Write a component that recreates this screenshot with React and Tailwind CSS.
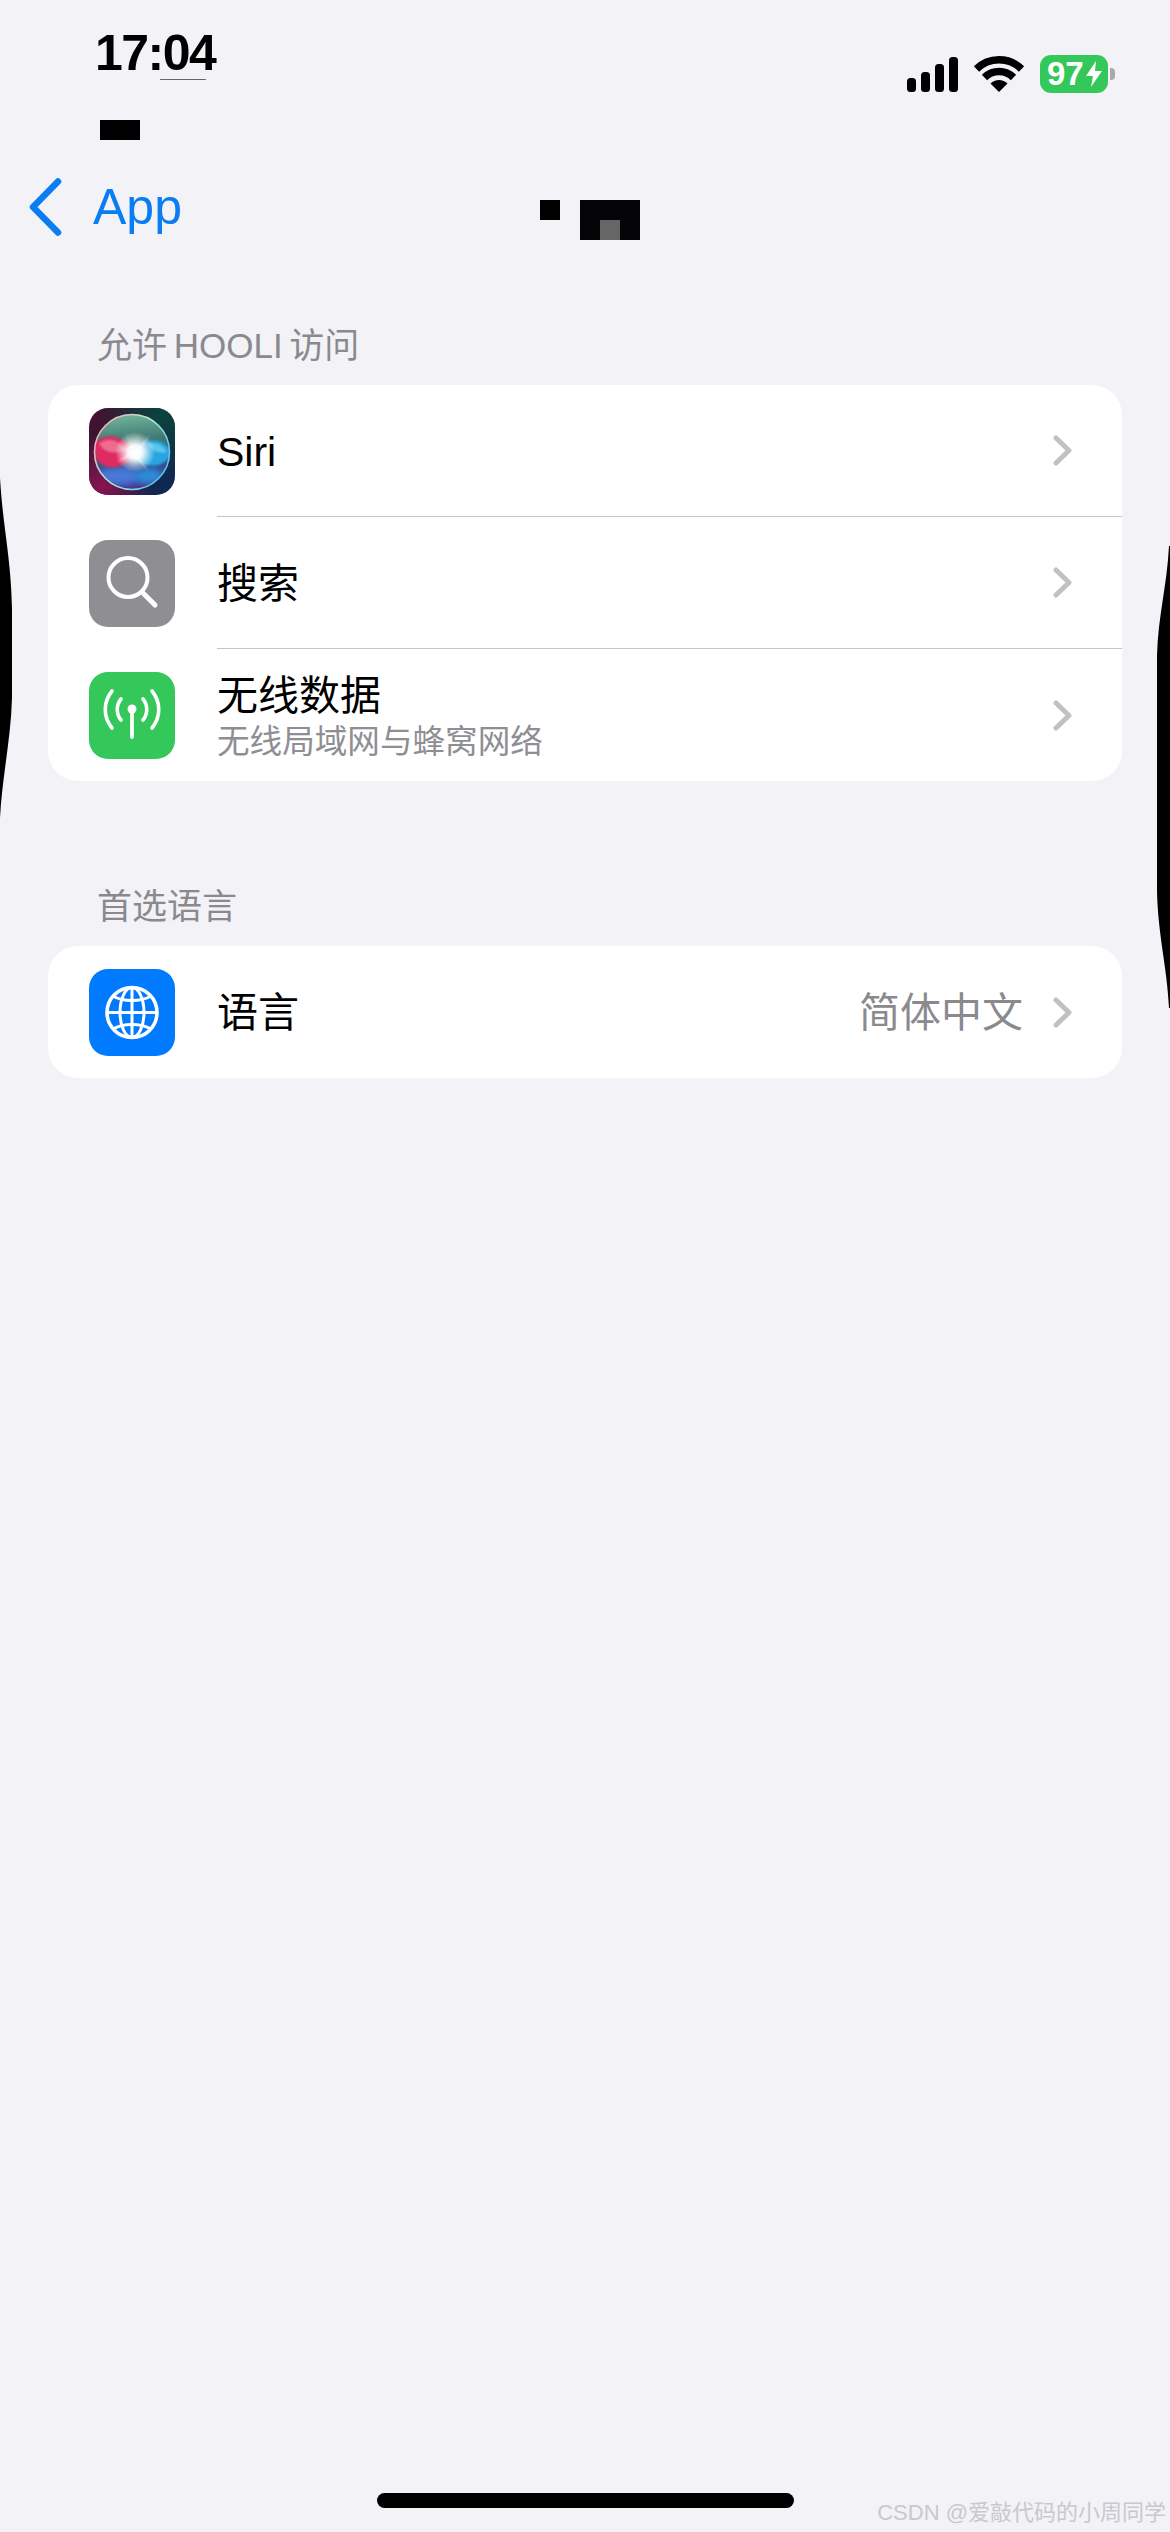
import React from "react";

const font = { fontFamily: '"Liberation Sans","Noto Sans CJK SC",sans-serif' };

function Chevron() {
  return (
    <svg width="19" height="31" viewBox="0 0 19 31" className="shrink-0">
      <path d="M3 3 L16 15.5 L3 28" fill="none" stroke="#c1c1c4" strokeWidth="5" strokeLinecap="round" strokeLinejoin="round" />
    </svg>
  );
}

function SiriIcon() {
  return (
    <svg width="86" height="87" viewBox="0 0 86 87" className="block">
      <defs>
        <clipPath id="sq"><rect width="86" height="87" rx="19" /></clipPath>
        <linearGradient id="bgL" x1="0" y1="0" x2="1" y2="1">
          <stop offset="0" stopColor="#4f0d2e" />
          <stop offset="0.5" stopColor="#1a2038" />
          <stop offset="1" stopColor="#0b2a5c" />
        </linearGradient>
        <radialGradient id="bgTR" cx="0.85" cy="0.1" r="0.75">
          <stop offset="0" stopColor="#0a4440" />
          <stop offset="1" stopColor="#0a4440" stopOpacity="0" />
        </radialGradient>
        <radialGradient id="bgBL" cx="0.15" cy="0.9" r="0.6">
          <stop offset="0" stopColor="#8a1250" />
          <stop offset="1" stopColor="#8a1250" stopOpacity="0" />
        </radialGradient>
        <linearGradient id="ball" x1="0.4" y1="0" x2="0.5" y2="1">
          <stop offset="0" stopColor="#74b59c" />
          <stop offset="0.35" stopColor="#3f7a72" />
          <stop offset="0.7" stopColor="#2f4f92" />
          <stop offset="1" stopColor="#4a3596" />
        </linearGradient>
        <linearGradient id="rim" x1="0" y1="0.2" x2="1" y2="0.8">
          <stop offset="0" stopColor="#ffa0b4" />
          <stop offset="0.5" stopColor="#a8eed4" />
          <stop offset="1" stopColor="#50b4e8" />
        </linearGradient>
        <radialGradient id="spark">
          <stop offset="0" stopColor="#ffffff" />
          <stop offset="0.35" stopColor="#ffffff" stopOpacity="0.95" />
          <stop offset="1" stopColor="#ffffff" stopOpacity="0" />
        </radialGradient>
        <filter id="b1"><feGaussianBlur stdDeviation="1.2" /></filter>
        <filter id="b3"><feGaussianBlur stdDeviation="3" /></filter>
        <clipPath id="ballClip"><circle cx="43" cy="44" r="38" /></clipPath>
      </defs>
      <g clipPath="url(#sq)">
        <rect width="86" height="87" fill="url(#bgL)" />
        <rect width="86" height="87" fill="url(#bgTR)" />
        <rect width="86" height="87" fill="url(#bgBL)" />
        <circle cx="43" cy="44" r="38" fill="url(#ball)" />
        <g clipPath="url(#ballClip)">
          <ellipse cx="30" cy="68" rx="22" ry="9" fill="#4a78d8" filter="url(#b3)" />
          <ellipse cx="60" cy="68" rx="14" ry="8" fill="#2a8cd4" filter="url(#b3)" />
          <path d="M46 45 C38 28 12 20 4 40 C6 64 34 66 46 45 Z" fill="#e02c62" filter="url(#b1)" />
          <path d="M10 36 C18 28 30 32 38 42 C28 46 16 46 10 36 Z" fill="#f59ab0" opacity="0.6" filter="url(#b1)" />
          <path d="M43 46 C50 30 74 26 82 44 C78 62 52 62 43 46 Z" fill="#2aa4e0" filter="url(#b1)" />
          <path d="M58 36 C66 33 74 37 78 44 C70 46 62 43 58 36 Z" fill="#74dcf0" opacity="0.65" filter="url(#b1)" />
        </g>
        <circle cx="43" cy="44" r="37.5" fill="none" stroke="url(#rim)" strokeWidth="1.6" />
        <circle cx="46" cy="44" r="20" fill="url(#spark)" />
        <path d="M46 44 L62 26 L48 46 L60 64 L45 47 L28 54 L44 43 L36 24 Z" fill="#ffffff" opacity="0.6" filter="url(#b1)" />
      </g>
    </svg>
  );
}

function SearchIcon() {
  return (
    <svg width="86" height="87" viewBox="0 0 86 87" className="block rounded-[19px] bg-[#8e8e93]">
      <circle cx="39" cy="37.5" r="19.5" fill="none" stroke="#fff" strokeWidth="4" />
      <path d="M53 52 L66 65" stroke="#fff" strokeWidth="5" strokeLinecap="round" />
    </svg>
  );
}

function AntennaIcon() {
  return (
    <svg width="86" height="87" viewBox="0 0 86 87" className="block rounded-[19px] bg-[#34c759]">
      <circle cx="43" cy="37" r="4.5" fill="#fff" />
      <path d="M43 38 V65" stroke="#fff" strokeWidth="3.8" strokeLinecap="round" />
      <g fill="none" stroke="#fff" strokeWidth="3.6" strokeLinecap="round">
        <path d="M32 27 C27 33 27 42 32 48" />
        <path d="M54 27 C59 33 59 42 54 48" />
        <path d="M23 19 C14 30 14 45 23 56" />
        <path d="M63 19 C72 30 72 45 63 56" />
      </g>
    </svg>
  );
}

function GlobeIcon() {
  return (
    <svg width="86" height="87" viewBox="0 0 86 87" className="block rounded-[19px] bg-[#007aff]">
      <g fill="none" stroke="#fff" strokeWidth="3">
        <circle cx="43" cy="43.5" r="25" strokeWidth="3.6" />
        <ellipse cx="43" cy="43.5" rx="12" ry="25" />
        <path d="M43 18.5 V68.5" />
        <path d="M18 43.5 H68" />
        <path d="M24 27 C34 33 52 33 62 27" />
        <path d="M24 60 C34 54 52 54 62 60" />
      </g>
    </svg>
  );
}

function Row({ icon, title, sub, value, last }) {
  return (
    <div className="flex h-[132px] items-stretch">
      <div className="flex w-[169px] shrink-0 items-center pl-[41px]">{icon}</div>
      <div className={`flex min-w-0 flex-1 items-center pr-[50px] ${last ? "" : "border-b border-[#c6c6c8]"}`}>
        <div className={`min-w-0 flex-1 ${sub ? "pt-[4px]" : "pt-[2px]"}`}>
          <div className="text-[41px] leading-[46px] text-black">{title}</div>
          {sub && <div className="mt-[3px] text-[32.6px] leading-[40px] text-[#8e8e93]">{sub}</div>}
        </div>
        {value && <div className="mr-[30px] pt-[2px] text-[41px] leading-[46px] text-[#8a8a8e]">{value}</div>}
        <Chevron />
      </div>
    </div>
  );
}

function Section({ title, height, children }) {
  return (
    <section>
      <div className={`flex items-end pl-[97px] pb-[16px] text-[35px] leading-[46px] text-[#8a8a8e] [word-spacing:-3px] ${height}`}>{title}</div>
      <div className="mx-[48px] overflow-hidden rounded-[30px] bg-white">{children}</div>
    </section>
  );
}

export default function App() {
  return (
    <div className="relative h-[2532px] w-[1170px] overflow-hidden bg-[#f2f2f7]" style={font}>
      <header className="flex h-[152px] items-start justify-between pl-[95px] pr-[55px]">
        <div className="mt-[25px] text-[50px] font-bold leading-[56px] tracking-[-1.5px] text-black">17:04</div>
        <div className="mt-[55px] flex items-start">
          <svg width="51" height="35" viewBox="0 0 51 35" className="mt-[2px]">
            <rect x="0" y="21" width="9" height="14" rx="3.5" />
            <rect x="14" y="15" width="9" height="20" rx="3.5" />
            <rect x="28" y="7" width="9" height="28" rx="3.5" />
            <rect x="42" y="0" width="9" height="35" rx="3.5" />
          </svg>
          <svg width="48" height="37" viewBox="0 0 48 37" className="ml-[17px] overflow-visible">
            <path d="M1.5 14 A32 32 0 0 1 46.5 14" fill="none" stroke="#000" strokeWidth="7.5" />
            <path d="M9.5 22.5 A20.5 20.5 0 0 1 38.5 22.5" fill="none" stroke="#000" strokeWidth="7.5" />
            <path d="M24 37 L15.5 28.5 A12 12 0 0 1 32.5 28.5 Z" fill="#000" />
          </svg>
          <div className="ml-[17px] flex h-[38px] w-[68px] items-center rounded-[11px] bg-[#34c759] pl-[7px] text-[33px] font-bold leading-[38px] text-white">
            <span>97</span>
            <svg width="18" height="26" viewBox="0 0 18 26" className="ml-[1px]">
              <path d="M11 0 L1 15 H8 L6 26 L17 10 H10 Z" fill="#fff" />
            </svg>
          </div>
          <div className="ml-[2px] mt-[13px] h-[12px] w-[5px] rounded-r-[4px] bg-[#a9a9ad]" />
        </div>
      </header>

      <nav className="flex h-[110px] items-center pl-[28px] text-[#0a7df2]">
        <svg width="34" height="58" viewBox="0 0 34 58">
          <path d="M30 3.5 L5 29 L30 54.5" fill="none" stroke="#0a7df2" strokeWidth="6.5" strokeLinecap="round" strokeLinejoin="round" />
        </svg>
        <span className="ml-[31px] text-[50px] leading-[58px]">App</span>
      </nav>

      <Section title="允许 HOOLI 访问" height="h-[123px]">
        <Row icon={<SiriIcon />} title="Siri" />
        <Row icon={<SearchIcon />} title="搜索" />
        <Row icon={<AntennaIcon />} title="无线数据" sub="无线局域网与蜂窝网络" last />
      </Section>

      <Section title="首选语言" height="h-[165px]">
        <Row icon={<GlobeIcon />} title="语言" value="简体中文" last />
      </Section>

      {/* redaction marks laid over the screenshot */}
      <div className="absolute left-[100px] top-[120px] h-[20px] w-[40px] bg-black" />
      <div className="absolute left-[160px] top-[79px] h-[1px] w-[46px] rounded-full bg-[#666]" />
      <div className="absolute left-[540px] top-[200px] h-[20px] w-[20px] bg-black" />
      <div className="absolute left-[580px] top-[200px] h-[40px] w-[60px] bg-[#050507]">
        <div className="absolute left-[20px] top-[20px] h-[20px] w-[20px] bg-[#666]" />
      </div>

      {/* black slivers at the screen edges */}
      <svg width="14" height="340" viewBox="0 0 14 340" className="absolute left-0 top-[478px]">
        <path d="M0 0 C3 50 11 80 12 130 L12 220 C11 260 2 300 0 340 Z" fill="#000" />
      </svg>
      <svg width="13" height="462" viewBox="0 0 13 462" className="absolute right-0 top-[546px]">
        <path d="M12 0 C10 40 1 70 0 110 L0 345 C1 390 10 420 12 462 L13 462 L13 0 Z" fill="#000" />
      </svg>

      <div className="absolute left-[377px] top-[2493px] h-[15px] w-[417px] rounded-full bg-black" />
      <div className="absolute right-[4px] top-[2498px] text-[22px] leading-[30px] text-[#c9c9cd]">CSDN @爱敲代码的小周同学</div>
    </div>
  );
}
